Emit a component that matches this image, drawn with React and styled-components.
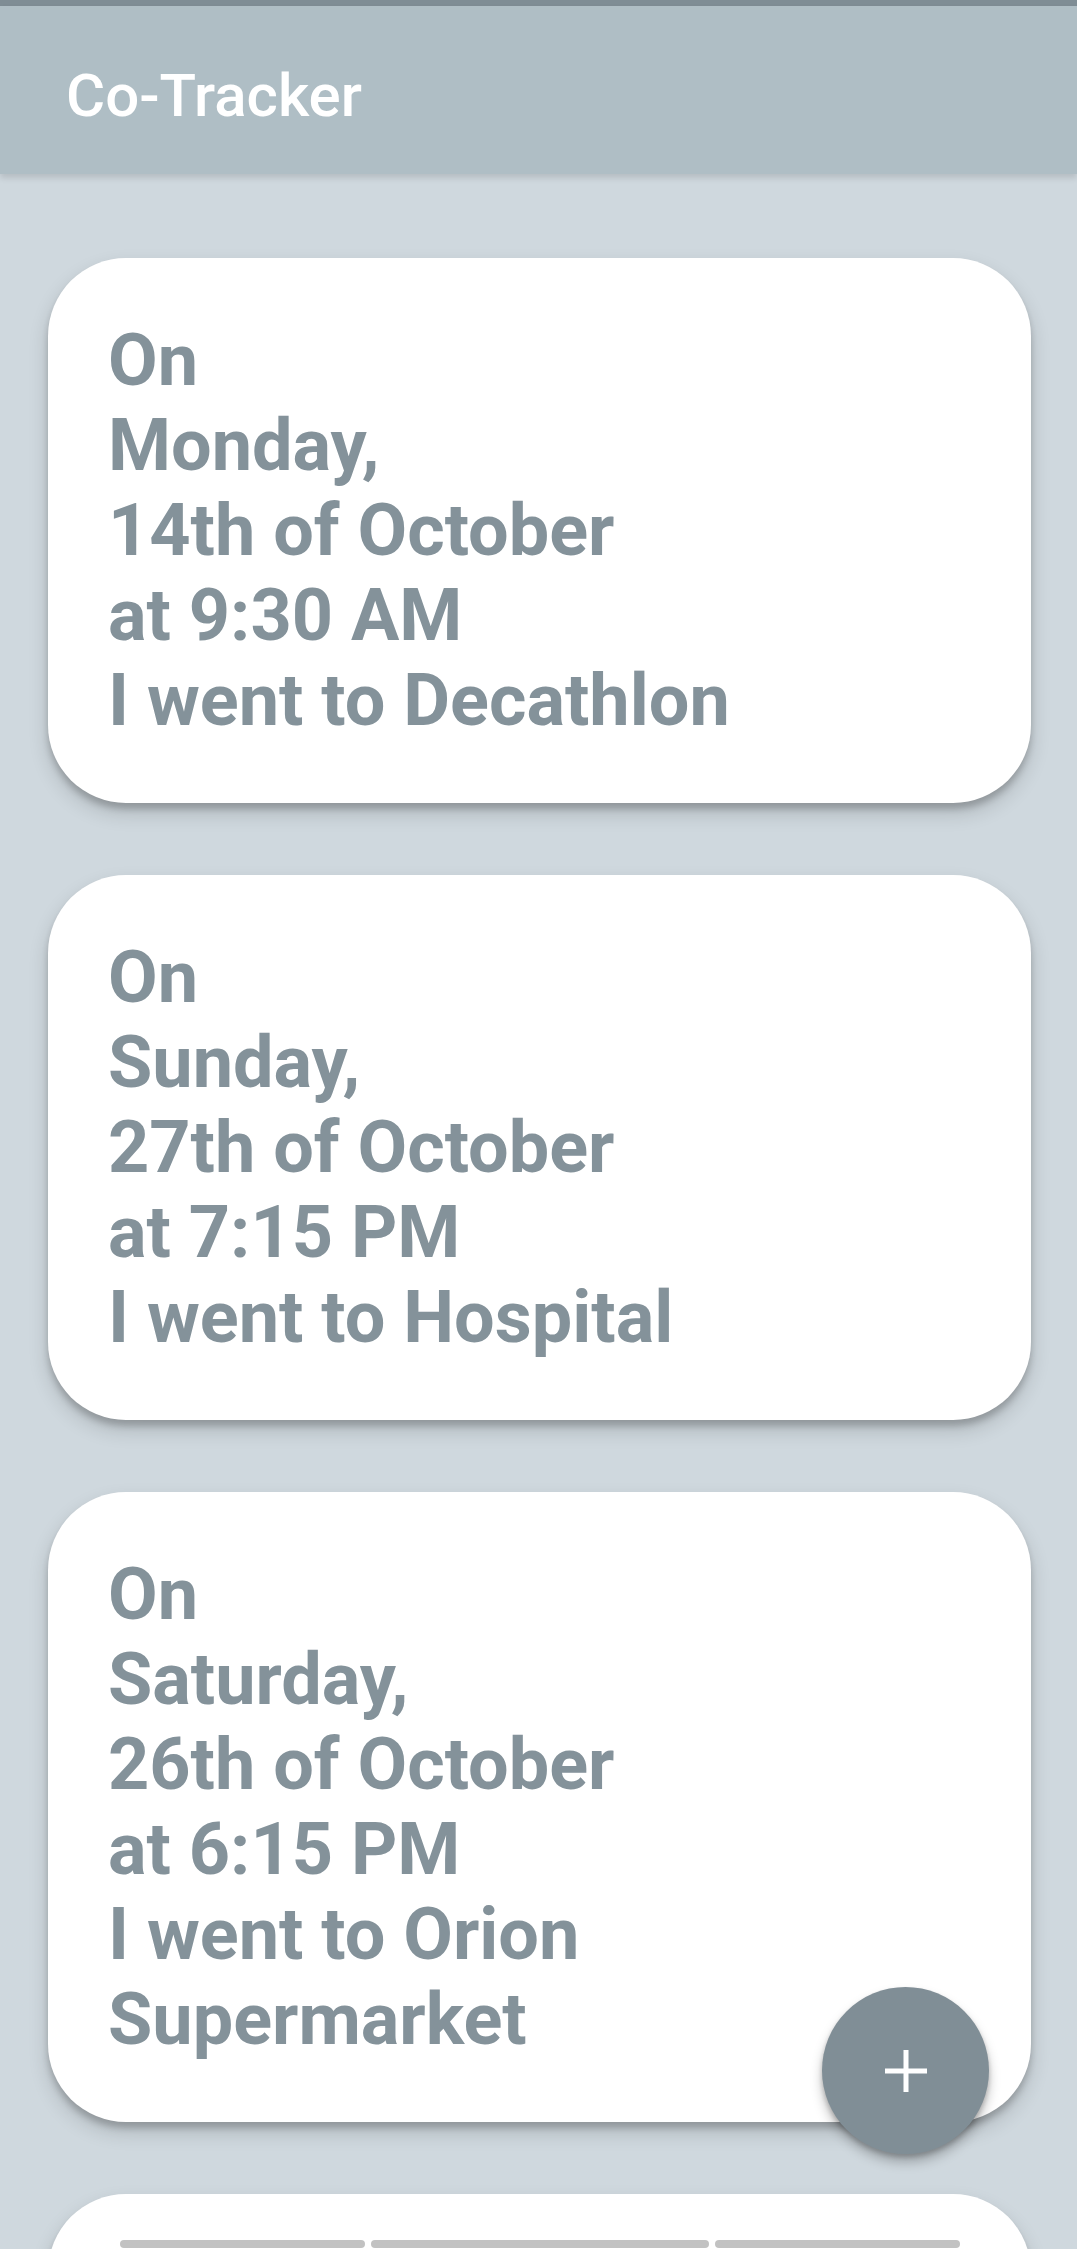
import React from "react";
import styled, { createGlobalStyle } from "styled-components";

const visits = [
    { id: 1, day: "Monday,", date: "14th of October", time: "at 9:30 AM", place: "I went to Decathlon" },
    { id: 2, day: "Sunday,", date: "27th of October", time: "at 7:15 PM", place: "I went to Hospital" },
    { id: 3, day: "Saturday,", date: "26th of October", time: "at 6:15 PM", place: "I went to Orion Supermarket" },
];

const App = () => {
    return (
        <Page>
            <GlobalStyle />
            <StatusStrip />
            <Header>Co-Tracker</Header>

            <List>
                {visits.map((item) => {
                    return (
                        <Card key={item.id}>
                            <Entry>
                                <Line>On</Line>
                                <Line>{item.day}</Line>
                                <Line>{item.date}</Line>
                                <Line>{item.time}</Line>
                                <Line>{item.place}</Line>
                            </Entry>
                        </Card>
                    );
                })}

                <Card>
                    <Loader>
                        <Bar w={245} />
                        <Bar w={338} />
                        <Bar w={245} />
                    </Loader>
                </Card>
            </List>

            <Fab aria-label="Add visit">
                <svg width="44" height="44" viewBox="0 0 44 44">
                    <path d="M22 1v42M1 22h42" stroke="#fff" strokeWidth="5" fill="none" />
                </svg>
            </Fab>
        </Page>
    );
};

const GlobalStyle = createGlobalStyle`
    body {
        margin: 0;
        background-color: #cfd8de;
        font-family: Roboto, "Liberation Sans", sans-serif;
    }
`;

const Page = styled.div`
    min-height: 100vh;
    background-color: #cfd8de;
`;

const StatusStrip = styled.div`
    height: 6px;
    background-color: #7f8d95;
`;

const Header = styled.header`
    position: relative;
    z-index: 1;
    padding: 55px 0 43px 66px;
    background-color: #afbec5;
    color: #ffffff;
    font-size: 60px;
    font-weight: 500;
    line-height: 70px;
    box-shadow: 0 4px 6px rgba(0, 0, 0, 0.12);
`;

const List = styled.main`
    display: flex;
    flex-direction: column;
    gap: 72px;
    padding: 84px 46px 200px 48px;
`;

const Card = styled.div`
    min-height: 420px;
    padding: 60px;
    background-color: #ffffff;
    border-radius: 78px;
    box-shadow: 0 10px 20px rgba(0, 0, 0, 0.16), 0 6px 6px rgba(0, 0, 0, 0.18);
`;

const Entry = styled.div`
    max-width: 720px;
    color: #84929a;
    font-size: 72px;
    font-weight: 700;
`;

const Line = styled.div`
    margin: 0;
`;

const Loader = styled.div`
    display: flex;
    gap: 6px;
    margin: -14px 0 0 12px;
`;

const Bar = styled.div`
    width: ${(props) => props.w}px;
    height: 8px;
    border-radius: 4px;
    background-color: #c2c2c2;
`;

const Fab = styled.button`
    position: fixed;
    right: 88px;
    bottom: 95px;
    width: 167px;
    height: 167px;

    display: flex;
    align-items: center;
    justify-content: center;

    border: none;
    border-radius: 50%;
    background-color: #808e96;
    box-shadow: 0 8px 12px rgba(0, 0, 0, 0.25), 0 3px 5px rgba(0, 0, 0, 0.2);
`;

export default App;
